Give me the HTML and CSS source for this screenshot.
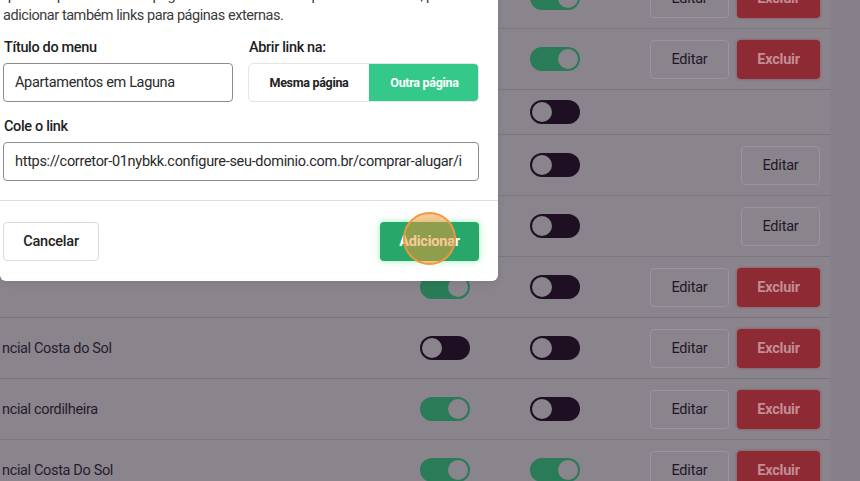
FILE: index.html
```html
<!DOCTYPE html>
<html lang="pt-BR">
<head>
<meta charset="utf-8">
<title>Menu</title>
<link rel="stylesheet" href="styles.css">
</head>
<body>
<div class="page">
  <div class="card">
    <div class="row">
      <div class="label"></div>
      <div class="cell"><span class="toggle on"></span></div>
      <div class="cell"><span class="toggle on"></span></div>
      <div class="actions"><button class="btn-edit">Editar</button><button class="btn-del">Excluir</button></div>
    </div>
    <div class="row">
      <div class="label"></div>
      <div class="cell"><span class="toggle on"></span></div>
      <div class="cell"><span class="toggle on"></span></div>
      <div class="actions"><button class="btn-edit">Editar</button><button class="btn-del">Excluir</button></div>
    </div>
    <div class="row short">
      <div class="label"></div>
      <div class="cell"><span class="toggle"></span></div>
      <div class="cell"><span class="toggle"></span></div>
      <div class="actions"></div>
    </div>
    <div class="row">
      <div class="label"></div>
      <div class="cell"><span class="toggle"></span></div>
      <div class="cell"><span class="toggle"></span></div>
      <div class="actions"><button class="btn-edit">Editar</button></div>
    </div>
    <div class="row">
      <div class="label"></div>
      <div class="cell"><span class="toggle"></span></div>
      <div class="cell"><span class="toggle"></span></div>
      <div class="actions"><button class="btn-edit">Editar</button></div>
    </div>
    <div class="row">
      <div class="label"></div>
      <div class="cell"><span class="toggle on"></span></div>
      <div class="cell"><span class="toggle"></span></div>
      <div class="actions"><button class="btn-edit">Editar</button><button class="btn-del">Excluir</button></div>
    </div>
    <div class="row">
      <div class="label">ncial Costa do Sol</div>
      <div class="cell"><span class="toggle"></span></div>
      <div class="cell"><span class="toggle"></span></div>
      <div class="actions"><button class="btn-edit">Editar</button><button class="btn-del">Excluir</button></div>
    </div>
    <div class="row">
      <div class="label">ncial cordilheira</div>
      <div class="cell"><span class="toggle on"></span></div>
      <div class="cell"><span class="toggle"></span></div>
      <div class="actions"><button class="btn-edit">Editar</button><button class="btn-del">Excluir</button></div>
    </div>
    <div class="row">
      <div class="label">ncial Costa Do Sol</div>
      <div class="cell"><span class="toggle on"></span></div>
      <div class="cell"><span class="toggle on"></span></div>
      <div class="actions"><button class="btn-edit">Editar</button><button class="btn-del">Excluir</button></div>
    </div>
  </div>
  <div class="strip"></div>
</div>

<div class="modal">
  <div class="modal-body">
    <p class="desc">quando quiser criar uma página de um resultado específico. Ou então, pode<br>adicionar também links para páginas externas.</p>
    <div class="two-col">
      <div class="field title-field">
        <label class="field-label">Título do menu</label>
        <div class="input">Apartamentos em Laguna</div>
      </div>
      <div class="field open-field">
        <label class="field-label">Abrir link na:</label>
        <div class="segmented">
          <span class="seg">Mesma página</span>
          <span class="seg active">Outra página</span>
        </div>
      </div>
    </div>
    <div class="field link-field">
      <label class="field-label">Cole o link</label>
      <div class="input url">https://corretor-01nybkk.configure-seu-dominio.com.br/comprar-alugar/i</div>
    </div>
  </div>
  <div class="modal-footer">
    <button class="btn-cancel">Cancelar</button>
    <button class="btn-add">Adicionar<span class="click-mark"></span></button>
  </div>
</div>
</body>
</html>
```

FILE: styles.css
```css
* { box-sizing: border-box; }
html, body {
  margin: 0;
  padding: 0;
  width: 860px;
  height: 481px;
  overflow: hidden;
}
body {
  background: #8a848c;
  font-family: Roboto, "Liberation Sans", sans-serif;
  font-size: 14.5px;
  letter-spacing: -0.35px;
  color: #231a2a;
  position: relative;
}
.page {
  display: flex;
  width: 860px;
  height: 540px;
  margin-top: -32px;
}
.card {
  width: 830px;
  flex-shrink: 0;
}
.strip {
  flex: 1;
  background: #86808a;
}
.row {
  display: grid;
  grid-template-columns: 420px 110px 1fr auto;
  align-items: center;
  height: 61px;
  border-bottom: 1px solid #7b7580;
  padding-right: 10px;
}
.row.short { height: 45px; }
.label {
  padding-left: 2px;
  color: #251c2c;
  white-space: nowrap;
}
.cell { display: flex; align-items: center; }
.toggle {
  display: block;
  width: 50px;
  height: 24px;
  border-radius: 12px;
  background: #1e0f22;
  position: relative;
}
.toggle::after {
  content: "";
  position: absolute;
  top: 2px;
  left: 2px;
  width: 20px;
  height: 20px;
  border-radius: 50%;
  background: #8a848c;
}
.toggle.on { background: #2a7b57; }
.toggle.on::after { left: 28px; }
.actions {
  display: flex;
  gap: 8px;
  justify-content: flex-end;
}
.actions button {
  font-family: inherit;
  font-size: 14.5px;
  letter-spacing: -0.2px;
  height: 39px;
  border-radius: 4px;
  cursor: pointer;
}
.btn-edit {
  width: 79px;
  background: #8a848c;
  border: 1px solid #9994a2;
  color: #1f1828;
}
.btn-del {
  width: 83px;
  background: #8e2a33;
  border: 0;
  color: #c28d95;
  font-weight: 700;
  box-shadow: 0 0 3px rgba(150, 40, 50, 0.6);
}

/* modal */
.modal {
  position: absolute;
  left: 0;
  top: -14px;
  width: 498px;
  background: #fff;
  border-radius: 0 0 6px 6px;
  box-shadow: 0 2px 8px rgba(0,0,0,0.08);
}
.modal-body {
  padding: 0 19px 19px 3px;
}
.desc {
  margin: 0;
  line-height: 20px;
  color: #3b3b3b;
  white-space: nowrap;
  overflow: hidden;
  letter-spacing: -0.45px;
}
.two-col {
  display: flex;
  gap: 15px;
  margin-top: 12px;
}
.title-field { width: 230px; flex-shrink: 0; }
.open-field { width: 231px; flex-shrink: 0; }
.field-label {
  display: block;
  line-height: 20px;
  font-weight: 500;
  color: #1e1e1e;
  padding-left: 1px;
  margin-bottom: 5px;
}
.input {
  height: 39px;
  border: 1px solid #8d8d8d;
  border-radius: 4px;
  padding: 0 11px;
  display: flex;
  align-items: center;
  color: #2a2a2a;
  white-space: nowrap;
  overflow: hidden;
}
.input.url { letter-spacing: -0.3px; }
.segmented {
  display: flex;
  width: 231px;
  height: 39px;
  border-radius: 5px;
  overflow: hidden;
  border: 1px solid #e4e4e4;
}
.seg {
  display: flex;
  align-items: center;
  justify-content: center;
  font-size: 12.5px;
  font-weight: 700;
  color: #222;
  width: 120px;
  flex-shrink: 0;
  letter-spacing: -0.3px;
}
.seg.active {
  width: 111px;
  background: #34c98a;
  color: #fff;
  margin: -1px -1px -1px 0;
}
.link-field { margin-top: 15px; }
.modal-footer {
  border-top: 1px solid #dedede;
  padding: 21px 19px 20px 3px;
  display: flex;
  justify-content: space-between;
  align-items: center;
}
.modal-footer button {
  font-family: inherit;
  font-size: 14.5px;
  letter-spacing: -0.2px;
  height: 39px;
  border-radius: 4px;
  cursor: pointer;
}
.btn-cancel {
  width: 96px;
  background: #fff;
  border: 1px solid #d4dce6;
  color: #222;
  font-weight: 500;
}
.btn-add {
  position: relative;
  width: 99px;
  background: #27a86a;
  border: 0;
  color: #fff;
  font-weight: 700;
  box-shadow: 0 0 6px rgba(60, 220, 120, 0.55);
}
.click-mark {
  position: absolute;
  left: 23px;
  top: -10px;
  width: 53px;
  height: 53px;
  border-radius: 50%;
  background: rgba(245, 148, 48, 0.5);
  border: 2px solid rgba(244, 150, 60, 0.95);
}
```
